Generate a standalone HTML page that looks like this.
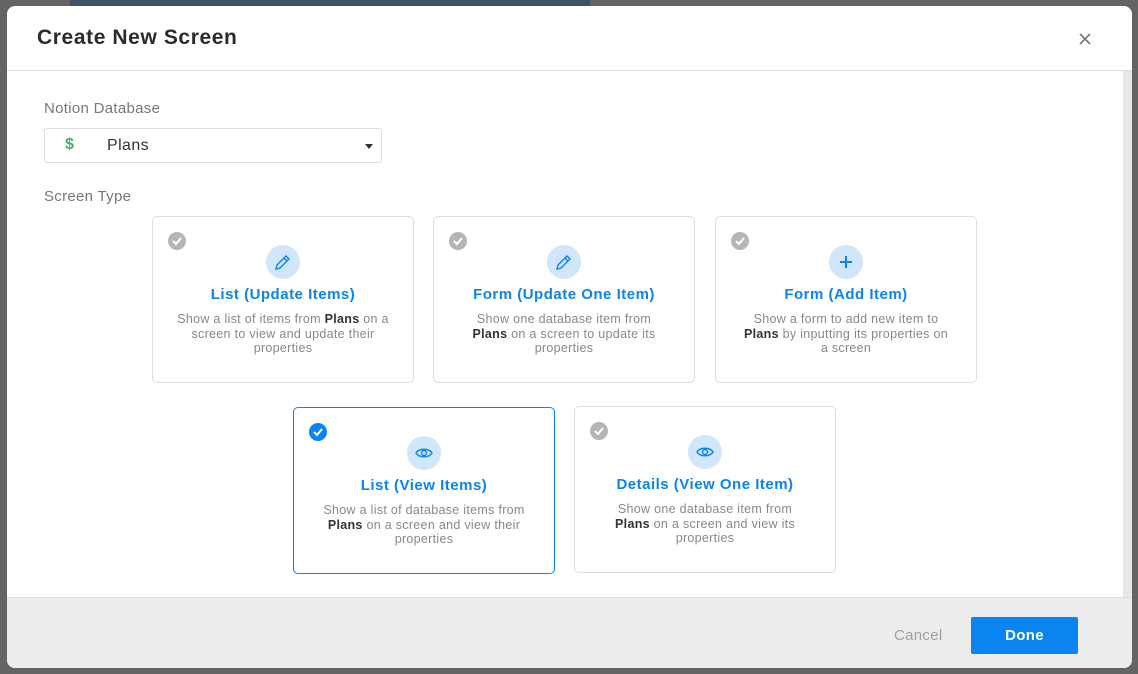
<!DOCTYPE html>
<html><head><meta charset="utf-8"><style>
*{box-sizing:border-box;margin:0;padding:0}
body{width:1138px;height:674px;background:#646464;font-family:"Liberation Sans",sans-serif;position:relative;overflow:hidden}
.bgtop{position:absolute;left:70px;top:0;width:520px;height:8px;background:#3e5268}
.modal{position:absolute;left:7px;top:6px;width:1125px;height:662px;background:#fff;border-radius:8px;overflow:hidden}
.hdr{height:65px;border-bottom:1px solid #dedede;position:relative}
.hdr h1{position:absolute;left:30px;top:20px;font-size:21px;font-weight:bold;color:#2b2b2b;letter-spacing:0.6px}
.x{position:absolute;left:1072px;top:26px}
.sb{position:absolute;left:1116px;top:65px;width:9px;height:526px;background:#e6e7ea}
.lbl{position:absolute;left:37px;font-size:15px;color:#777;letter-spacing:0.3px}
.sel{position:absolute;left:37px;top:122px;width:338px;height:35px;border:1px solid #ddd;border-radius:3px}
.sel .d{position:absolute;left:20px;top:7px;color:#3cb371;font-weight:bold;font-size:16px}
.sel .t{position:absolute;left:62px;top:8px;font-size:16px;color:#333;letter-spacing:0.4px}
.sel .c{position:absolute;right:8px;top:15px;border-left:4px solid transparent;border-right:4px solid transparent;border-top:5px solid #333}
.card{position:absolute;width:262px;height:167px;border:1px solid #ddd;border-radius:5px;text-align:center}
.card.on{border-color:#0a84f0}
.chk{position:absolute;left:15px;top:15px;width:18px;height:18px;border-radius:50%;background:#b5b5b5}
.on .chk{background:#0a84f0}
.chk svg{position:absolute;left:3px;top:3px}
.ic{position:absolute;left:113px;top:28px;width:34px;height:34px;border-radius:50%;background:#cfe6fb}
.ic svg{position:absolute;left:7px;top:7px}
.ti{position:absolute;left:0;right:0;top:69px;font-size:15px;font-weight:bold;color:#0a84f0;letter-spacing:0.5px}
.ds{position:absolute;left:4px;right:4px;top:95px;font-size:12.5px;line-height:14.5px;color:#888;letter-spacing:0.3px;white-space:nowrap}
.ds b{color:#333;font-weight:bold}
.ftr{position:absolute;left:0;top:591px;width:1125px;height:71px;background:#ececec;border-top:1px solid #ddd}
.cancel{position:absolute;left:887px;top:29px;font-size:15px;color:#a0a0a0;letter-spacing:0.3px}
.done{position:absolute;left:964px;top:19px;width:107px;height:37px;background:#0a84f0;color:#fff;font-size:15px;font-weight:bold;text-align:center;line-height:37px;border-radius:2px;letter-spacing:0.3px}
</style></head><body>
<div class="bgtop"></div>
<div class="modal">
<div class="hdr"><h1>Create New Screen</h1><div class="x"><svg width="12" height="12"><path d="M1 1l10 10M11 1L1 11" stroke="#777" stroke-width="1.6"/></svg></div></div>
<div class="sb"></div>
<div class="lbl" style="top:94px">Notion Database</div>
<div class="sel"><span class="d">$</span><span class="t">Plans</span><span class="c"></span></div>
<div class="lbl" style="top:182px">Screen Type</div>

<div class="card" style="left:145px;top:210px"><div class="chk"><svg width="12" height="12"><path d="M2 6l3 3 5-6" stroke="#fff" stroke-width="2" fill="none"/></svg></div>
<div class="ic"><svg width="20" height="20" viewBox="0 0 20 20"><path d="M3 17l1-4L13 4l3 3-9 9zM11 6l3 3" stroke="#0a84f0" stroke-width="1.4" fill="none"/></svg></div>
<div class="ti">List (Update Items)</div><div class="ds">Show a list of items from <b>Plans</b> on a<br>screen to view and update their<br>properties</div></div>

<div class="card" style="left:426px;top:210px"><div class="chk"><svg width="12" height="12"><path d="M2 6l3 3 5-6" stroke="#fff" stroke-width="2" fill="none"/></svg></div>
<div class="ic"><svg width="20" height="20" viewBox="0 0 20 20"><path d="M3 17l1-4L13 4l3 3-9 9zM11 6l3 3" stroke="#0a84f0" stroke-width="1.4" fill="none"/></svg></div>
<div class="ti">Form (Update One Item)</div><div class="ds">Show one database item from<br><b>Plans</b> on a screen to update its<br>properties</div></div>

<div class="card" style="left:708px;top:210px"><div class="chk"><svg width="12" height="12"><path d="M2 6l3 3 5-6" stroke="#fff" stroke-width="2" fill="none"/></svg></div>
<div class="ic"><svg width="20" height="20" viewBox="0 0 20 20"><path d="M10 4v12M4 10h12" stroke="#0a84f0" stroke-width="2" fill="none"/></svg></div>
<div class="ti">Form (Add Item)</div><div class="ds">Show a form to add new item to<br><b>Plans</b> by inputting its properties on<br>a screen</div></div>

<div class="card on" style="left:286px;top:401px"><div class="chk"><svg width="12" height="12"><path d="M2 6l3 3 5-6" stroke="#fff" stroke-width="2" fill="none"/></svg></div>
<div class="ic"><svg width="20" height="20" viewBox="0 0 20 20"><path d="M2 10c3-5 13-5 16 0c-3 5-13 5-16 0z" stroke="#0a84f0" stroke-width="1.4" fill="none"/><circle cx="10" cy="10" r="2.5" stroke="#0a84f0" stroke-width="1.4" fill="none"/></svg></div>
<div class="ti">List (View Items)</div><div class="ds">Show a list of database items from<br><b>Plans</b> on a screen and view their<br>properties</div></div>

<div class="card" style="left:567px;top:400px"><div class="chk"><svg width="12" height="12"><path d="M2 6l3 3 5-6" stroke="#fff" stroke-width="2" fill="none"/></svg></div>
<div class="ic"><svg width="20" height="20" viewBox="0 0 20 20"><path d="M2 10c3-5 13-5 16 0c-3 5-13 5-16 0z" stroke="#0a84f0" stroke-width="1.4" fill="none"/><circle cx="10" cy="10" r="2.5" stroke="#0a84f0" stroke-width="1.4" fill="none"/></svg></div>
<div class="ti">Details (View One Item)</div><div class="ds">Show one database item from<br><b>Plans</b> on a screen and view its<br>properties</div></div>

<div class="ftr"><span class="cancel">Cancel</span><div class="done">Done</div></div>
</div>
</body></html>
